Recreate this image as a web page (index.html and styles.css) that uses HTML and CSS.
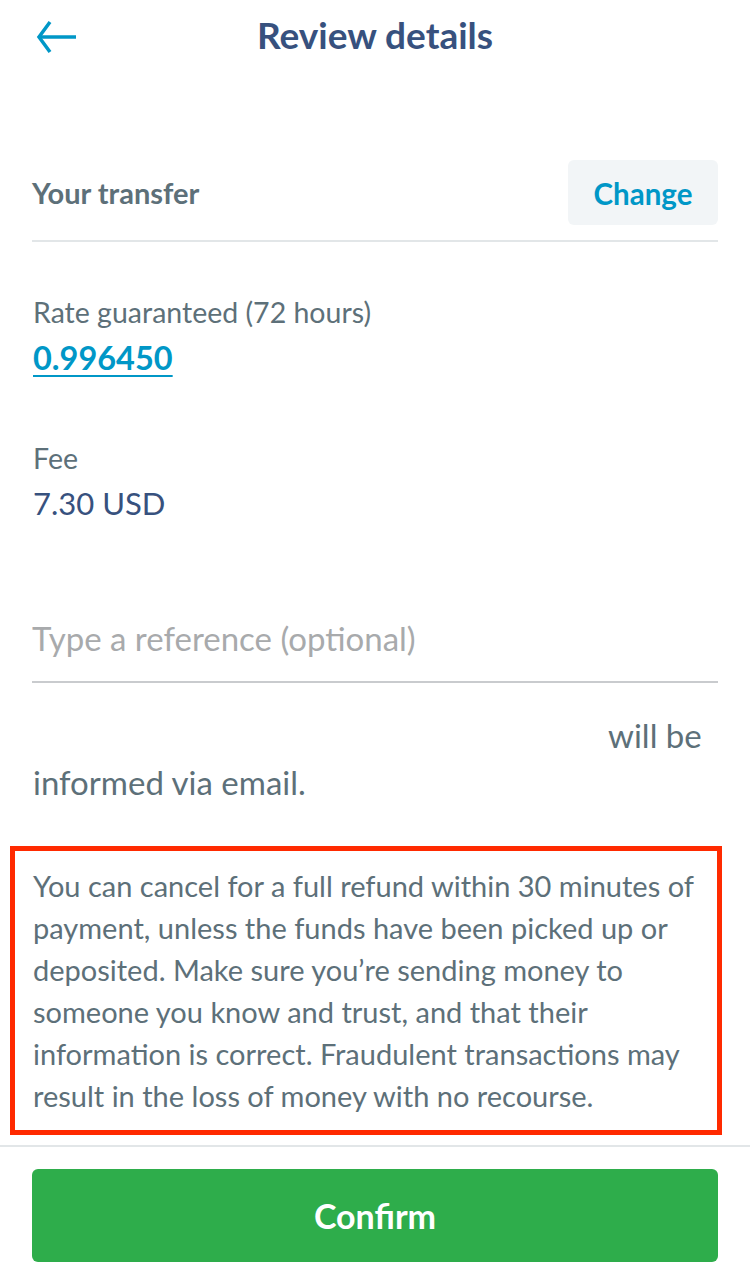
FILE: index.html
```html
<!DOCTYPE html>
<html lang="en">
<head>
    <meta charset="UTF-8">
    <meta name="viewport" content="width=device-width, initial-scale=1.0">
    <title>Review details</title>
    <link rel="stylesheet" href="styles.css">
</head>
<body>
    <div class="screen">
        <div class="top-bar">
            <button class="back-btn" aria-label="Back">
                <svg width="42" height="34" viewBox="0 0 42 34" fill="none" stroke="#0097c7" stroke-width="3.5">
                    <path d="M41 17H4"/>
                    <path d="M15 2L4 17L15 32"/>
                </svg>
            </button>
            <h1>Review details</h1>
        </div>

        <div class="section-head">
            <h2>Your transfer</h2>
            <button class="change-btn">Change</button>
        </div>

        <div class="detail">
            <div class="label">Rate guaranteed (72 hours)</div>
            <a class="rate" href="#">0.996450</a>
        </div>

        <div class="detail fee">
            <div class="label">Fee</div>
            <div class="value">7.30 USD</div>
        </div>

        <div class="reference">
            <input type="text" placeholder="Type a reference (optional)">
        </div>

        <p class="notify"><span class="recipient"></span>will be informed via email.</p>

        <div class="warning">
            You can cancel for a full refund within 30 minutes of payment, unless the funds have been picked up or deposited. Make sure you’re sending money to someone you know and trust, and that their information is correct. Fraudulent transactions may result in the loss of money with no recourse.
        </div>

        <div class="footer">
            <button class="confirm-btn">Confirm</button>
        </div>
    </div>
</body>
</html>
```

FILE: styles.css
```css
* {
    margin: 0;
    padding: 0;
    box-sizing: border-box;
    font-family: Lato, 'Open Sans', sans-serif;
}

body {
    background: white;
    width: 750px;
}

.screen {
    display: flex;
    flex-direction: column;
}

.top-bar {
    position: relative;
    height: 76px;
    display: flex;
    align-items: center;
    justify-content: center;
}

.back-btn {
    position: absolute;
    left: 35px;
    top: 20px;
    background: none;
    border: none;
    display: flex;
}

.top-bar h1 {
    font-size: 37px;
    line-height: 44px;
    font-weight: 700;
    color: #37517e;
    margin-top: -6px;
}

.section-head {
    margin: 84px 32px 0;
    height: 82px;
    display: flex;
    align-items: flex-start;
    justify-content: space-between;
    border-bottom: 2px solid #e2e6e8;
}

.section-head h2 {
    font-size: 29px;
    line-height: 36px;
    font-weight: 700;
    color: #5d7079;
    margin-top: 15px;
}

.change-btn {
    width: 150px;
    height: 65px;
    background: #f2f5f7;
    border: none;
    border-radius: 6px;
    font-size: 29.5px;
    font-weight: 700;
    color: #0097c7;
    padding-top: 2px;
}

.detail {
    padding: 0 33px;
    margin-top: 52px;
}

.label {
    font-size: 28.5px;
    color: #5d7079;
    line-height: 36px;
}

.rate {
    display: inline-block;
    margin-top: 8px;
    font-size: 32.5px;
    line-height: 40px;
    font-weight: 700;
    color: #0097c7;
    text-decoration-thickness: 2px;
    text-underline-offset: 5px;
}

.fee {
    margin-top: 62px;
}

.value {
    margin-top: 7px;
    font-size: 31px;
    line-height: 40px;
    color: #37517e;
}

.reference {
    margin: 88px 32px 0;
    border-bottom: 2px solid #c9cbce;
}

.reference input {
    display: block;
    width: 100%;
    height: 70px;
    border: none;
    outline: none;
    font-size: 33px;
    color: #37517e;
    padding-bottom: 16px;
}

.reference input::placeholder {
    color: #a8aaac;
}

.notify {
    margin: 29px 32px 0 33px;
    font-size: 33px;
    line-height: 47px;
    color: #5d7079;
}

.recipient {
    display: inline-block;
    width: 575px;
}

.warning {
    margin: 40px 28px 0 10px;
    border: 5px solid #ff2a00;
    padding: 14px 18px 13px 18px;
    font-size: 29px;
    line-height: 42px;
    color: #5d7079;
}

.footer {
    margin-top: 10px;
    border-top: 2px solid #e2e6e8;
    padding: 22px 32px 24px;
}

.confirm-btn {
    width: 100%;
    height: 93px;
    background: #2ead4b;
    border: none;
    border-radius: 6px;
    font-size: 34px;
    font-weight: 700;
    color: white;
}
```
